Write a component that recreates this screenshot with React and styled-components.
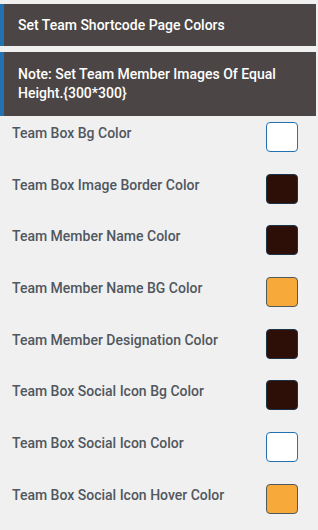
import styled, { createGlobalStyle } from 'styled-components'

const GlobalStyle = createGlobalStyle`
  body {
    margin: 0;
    background: #f0f0f0;
    font-family: Roboto, "Liberation Sans", sans-serif;
  }
`
const Panel = styled('div')`
  display: flex;
  flex-flow: column nowrap;
  padding-top: 4px;
  width: 318px;
`
const Heading = styled('h3')`
  margin: 0 2px ${({ $gap }) => $gap}px 0;
  padding: 0 14px;
  min-height: ${({ $height }) => $height}px;
  display: flex;
  align-items: center;
  background: #4b4645;
  border-left: 4px solid #2271b1;
  color: #fff;
  font-size: 14px;
  font-weight: 500;
  line-height: 19px;
`
const Row = styled('div')`
  display: flex;
  justify-content: space-between;
  align-items: flex-start;
  padding: 6px 20px 15.7px 12px;
`
const Label = styled('label')`
  padding-top: 2px;
  color: #50575e;
  font-size: 14px;
  font-weight: 500;
  line-height: 18px;
`
const Swatch = styled('span')`
  width: 32px;
  height: 30px;
  box-sizing: border-box;
  border-radius: 4px;
  border: 1px solid ${({ $border }) => $border};
  background: ${({ $color }) => $color};
`

const fields = [
  { label: 'Team Box Bg Color', color: '#ffffff', border: '#2271b1' },
  { label: 'Team Box Image Border Color', color: '#2d0f08', border: '#1d3348' },
  { label: 'Team Member Name Color', color: '#2d0f08', border: '#1d3348' },
  { label: 'Team Member Name BG Color', color: '#f7a93a', border: '#4f5a60' },
  { label: 'Team Member Designation Color', color: '#2d0f08', border: '#1d3348' },
  { label: 'Team Box Social Icon Bg Color', color: '#2d0f08', border: '#1d3348' },
  { label: 'Team Box Social Icon Color', color: '#ffffff', border: '#2271b1' },
  { label: 'Team Box Social Icon Hover Color', color: '#f7a93a', border: '#4f5a60' },
]

const App = () => {
  const rows = fields.map(({ label, color, border }) => (
    <Row key={label}>
      <Label>{label}</Label>
      <Swatch $color={color} $border={border} />
    </Row>
  ))
  return (
    <>
      <GlobalStyle />
      <Panel>
        <Heading $height={42} $gap={6}>Set Team Shortcode Page Colors</Heading>
        <Heading $height={64} $gap={0}>Note: Set Team Member Images Of Equal Height.{'{300*300}'}</Heading>
        {rows}
      </Panel>
    </>
  )
}

export default App
